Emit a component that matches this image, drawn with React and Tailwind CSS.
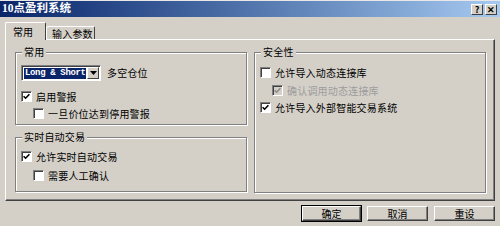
import React from 'react';

const font = { fontFamily: '"Noto Sans CJK SC", "Noto Sans", sans-serif' };

const Check = ({ checked, disabled }) => (
  <span
    className={`w-[11px] h-[11px] shrink-0 flex items-center justify-center border border-t-[#808080] border-l-[#808080] border-r-white border-b-white shadow-[inset_1px_1px_0_#404040] ${
      disabled ? 'bg-[#d4d0c8]' : 'bg-white'
    }`}
  >
    {checked && (
      <svg width="7" height="7" viewBox="0 0 7 7">
        <path d="M0.6 3.2 L2.6 5.2 L6.4 1.2" stroke={disabled ? '#8a8a8a' : '#000'} strokeWidth="1.6" fill="none" />
      </svg>
    )}
  </span>
);

const Row = ({ checked, disabled, indent, className = '', children }) => (
  <div className={`flex items-center h-[13px] gap-[4px] ${indent ? 'ml-[12px]' : ''} ${className}`}>
    <Check checked={checked} disabled={disabled} />
    <span className={`text-[10px] leading-[13px] tracking-[0.2px] ${disabled ? 'text-[#9c9c9c]' : 'text-black'}`}>
      {children}
    </span>
  </div>
);

const Group = ({ title, className = '', children }) => (
  <div
    className={`flex flex-col pl-[5px] border border-[#808080] shadow-[inset_1px_1px_0_#fff,1px_1px_0_#fff] ${className}`}
  >
    <span className="-mt-[7px] self-start ml-[1px] px-[2px] bg-[#d4d0c8] text-[10px] leading-[12px] tracking-[0.2px]">
      {title}
    </span>
    {children}
  </div>
);

const Btn = ({ children, isDefault }) => (
  <div className={isDefault ? 'border border-black' : 'border border-transparent'}>
    <button
      className={`${isDefault ? 'w-[59px] h-[15px]' : 'w-[61px] h-[15px]'} flex items-center justify-center bg-[#d4d0c8] border border-t-white border-l-white border-r-[#404040] border-b-[#404040] shadow-[inset_-1px_-1px_0_#808080] text-[10px] leading-none`}
    >
      {children}
    </button>
  </div>
);

const TitleBtn = ({ children }) => (
  <span className="w-[12px] h-[11px] flex items-center justify-center bg-[#d4d0c8] border border-t-white border-l-white border-r-[#404040] border-b-[#404040] text-[9px] font-bold leading-none text-black">
    {children}
  </span>
);

export default function App() {
  return (
    <div className="w-[500px] h-[226px] bg-[#d4d0c8] flex flex-col text-black overflow-hidden" style={font}>
      {/* title bar */}
      <div className="h-[17px] flex items-center justify-between pl-[2px] pr-[3px] border-t border-[#e8e8e8] bg-gradient-to-r from-[#0a246a] to-[#a6caf0]">
        <span className="text-white font-bold text-[11.5px] leading-none" style={{ fontFamily: '"Liberation Serif", "Noto Sans CJK SC", serif' }}>
          10点盈利系统
        </span>
        <div className="flex gap-[2px]">
          <TitleBtn>?</TitleBtn>
          <TitleBtn>✕</TitleBtn>
        </div>
      </div>

      {/* tabs */}
      <div className="mt-[5px] ml-[5px] h-[17px] flex items-end">
        <div className="relative z-10 w-[41px] h-[18px] -mb-[1px] pl-[7px] pt-[2px] bg-[#d4d0c8] border-t border-l border-white border-r border-r-[#404040] rounded-t-[2px] text-[10px] leading-[14px]">
          常用
        </div>
        <div className="w-[49px] h-[13px] pl-[5px] bg-[#d4d0c8] border-t border-l border-white border-r border-r-[#404040] rounded-t-[2px] text-[10px] leading-[13px] tracking-[0.2px]">
          输入参数
        </div>
      </div>

      {/* panel */}
      <div className="mx-[5px] h-[162px] pt-[12px] pl-[9px] pr-[8px] border-t border-l border-white border-r border-b border-r-[#404040] border-b-[#404040] shadow-[inset_-1px_-1px_0_#808080] grid grid-cols-2 gap-[7px]">
        <div className="flex flex-col gap-[12px]">
          <Group title="常用" className="h-[73px]">
            <div className="mt-[7px] flex items-center gap-[6px]">
              <div className="w-[80px] h-[16px] flex items-center border border-t-[#808080] border-l-[#808080] border-r-white border-b-white shadow-[inset_1px_1px_0_#404040] bg-white pl-[2px] pr-[1px]">
                <span
                  className="flex-1 h-[11px] bg-[#0a246a] text-white text-[9px] font-bold leading-[11px] tracking-[-0.35px] pl-[1px]"
                  style={{ fontFamily: '"Liberation Mono", monospace' }}
                >
                  Long &amp; Short
                </span>
                <span className="w-[12px] h-[12px] ml-[1px] flex items-center justify-center bg-[#d4d0c8] border border-t-white border-l-white border-r-[#404040] border-b-[#404040]">
                  <svg width="7" height="4" viewBox="0 0 7 4">
                    <path d="M0 0 H7 L3.5 4 Z" fill="#000" />
                  </svg>
                </span>
              </div>
              <span className="text-[10px] leading-[12px] tracking-[0.2px]">多空仓位</span>
            </div>
            <Row checked className="mt-[9px]">启用警报</Row>
            <Row indent className="mt-[4px]">一旦价位达到停用警报</Row>
          </Group>
          <Group title="实时自动交易" className="h-[55px]">
            <Row checked className="mt-[7px]">允许实时自动交易</Row>
            <Row indent className="mt-[6px]">需要人工确认</Row>
          </Group>
        </div>
        <Group title="安全性" className="h-[141px]">
          <Row className="mt-[8px]">允许导入动态连接库</Row>
          <Row checked disabled indent className="mt-[5px]">确认调用动态连接库</Row>
          <Row checked className="mt-[4px]">允许导入外部智能交易系统</Row>
        </Group>
      </div>

      {/* buttons */}
      <div className="mt-[4px] pr-[4px] flex justify-end gap-[4px]">
        <Btn isDefault>确定</Btn>
        <Btn>取消</Btn>
        <Btn>重设</Btn>
      </div>
    </div>
  );
}
